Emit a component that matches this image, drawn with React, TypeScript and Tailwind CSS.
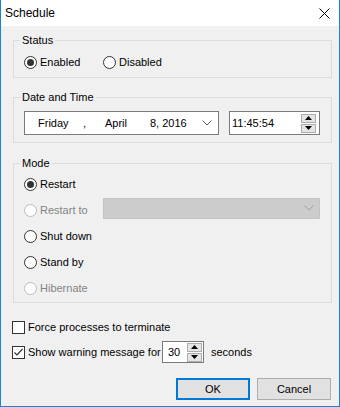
import type { ReactNode } from "react";

const font = "font-['Liberation_Sans',Arial,sans-serif]";

function Radio({ label, checked, disabled }: { label: string; checked?: boolean; disabled?: boolean }) {
  return (
    <div className="flex items-center">
      <span
        className={`flex h-[13px] w-[13px] items-center justify-center rounded-full border ${
          disabled ? "border-[#bcbcbc] bg-white" : "border-[#333333] bg-white"
        }`}
      >
        {checked && <span className="h-[7px] w-[7px] rounded-full bg-[#333333]" />}
      </span>
      <span className={`ml-[3px] ${disabled ? "text-[#838383]" : "text-black"}`}>{label}</span>
    </div>
  );
}

function Checkbox({ checked }: { checked?: boolean }) {
  return (
    <span className="flex h-[13px] w-[13px] items-center justify-center border border-[#333333] bg-white">
      {checked && (
        <svg width="11" height="11" viewBox="0 0 11 11">
          <path d="M1.5 5.5 L4 8 L9.5 2" fill="none" stroke="#333" strokeWidth="1.2" />
        </svg>
      )}
    </span>
  );
}

function Spin() {
  return (
    <div className="flex w-[15px] flex-col gap-[1px]">
      <div className="flex h-[9px] items-center justify-center border border-[#adadad] bg-[#e5e5e5]">
        <svg width="7" height="4" viewBox="0 0 7 4">
          <path d="M3.5 0 L7 4 L0 4 Z" fill="#000" />
        </svg>
      </div>
      <div className="flex h-[9px] items-center justify-center border border-[#adadad] bg-[#e5e5e5]">
        <svg width="7" height="4" viewBox="0 0 7 4">
          <path d="M0 0 L7 0 L3.5 4 Z" fill="#000" />
        </svg>
      </div>
    </div>
  );
}

function Chevron({ color }: { color: string }) {
  return (
    <svg width="10" height="6" viewBox="0 0 10 6">
      <path d="M0.5 0.5 L5 5 L9.5 0.5" fill="none" stroke={color} strokeWidth="1" />
    </svg>
  );
}

function Group({ title, className, children }: { title: string; className: string; children: ReactNode }) {
  return (
    <fieldset className={`border border-[#dcdcdc] ${className}`}>
      <legend className="ml-[6px] px-[2px] leading-[14px] text-black">{title}</legend>
      {children}
    </fieldset>
  );
}

export default function App() {
  return (
    <div
      className={`${font} flex h-[407px] w-[340px] flex-col border border-t-0 border-[#1883d7] bg-[#f0f0f0] text-[11px] text-black`}
    >
      {/* title bar */}
      <div className="flex h-[26px] items-center justify-between bg-white pl-[4px] pr-[9px]">
        <span className="text-[12px]">Schedule</span>
        <svg width="11" height="11" viewBox="0 0 11 11">
          <path d="M0.5 0.5 L10.5 10.5 M10.5 0.5 L0.5 10.5" stroke="#000" strokeWidth="1" />
        </svg>
      </div>

      <div className="flex flex-1 flex-col pl-[12px] pr-[7px] pt-[7px]">
        <Group title="Status" className="h-[45px]">
          <div className="flex h-[16px] items-center pl-[10px] pt-[0px] mt-[7px]">
            <div className="w-[79px]">
              <Radio label="Enabled" checked />
            </div>
            <Radio label="Disabled" />
          </div>
        </Group>

        <Group title="Date and Time" className="mt-[12px] h-[53px]">
          <div className="mt-[7px] flex pl-[10px]">
            <div className="flex h-[24px] w-[195px] items-center border border-[#7a7a7a] bg-white pl-[13px] pr-[6px]">
              <span className="w-[45px]">Friday</span>
              <span className="w-[22px]">,</span>
              <span className="w-[45px]">April</span>
              <span className="flex-1">8, 2016</span>
              <Chevron color="#606060" />
            </div>
            <div className="ml-[10px] flex h-[24px] w-[91px] items-center justify-between border border-[#7a7a7a] bg-white pl-[2px] pr-[3px]">
              <span>11:45:54</span>
              <Spin />
            </div>
          </div>
        </Group>

        <Group title="Mode" className="mt-[13px] h-[147px]">
          <div className="flex flex-col pl-[10px] pt-[1px]">
            <div className="flex h-[26px] items-center">
              <Radio label="Restart" checked />
            </div>
            <div className="flex h-[26px] items-center">
              <div className="w-[79px]">
                <Radio label="Restart to" disabled />
              </div>
              <div className="-mt-[4px] flex h-[21px] flex-1 items-center justify-end border border-[#c4c4c4] bg-[#cccccc] pr-[5px] mr-[11px]">
                <Chevron color="#a0a0a0" />
              </div>
            </div>
            <div className="flex h-[26px] items-center">
              <Radio label="Shut down" />
            </div>
            <div className="flex h-[26px] items-center">
              <Radio label="Stand by" />
            </div>
            <div className="flex h-[26px] items-center">
              <Radio label="Hibernate" disabled />
            </div>
          </div>
        </Group>

        <div className="-ml-[1px] mt-[15px] flex h-[18px] items-center">
          <Checkbox />
          <span className="ml-[3px]">Force processes to terminate</span>
        </div>
        <div className="-ml-[1px] mt-[5px] flex h-[22px] items-center">
          <Checkbox checked />
          <span className="ml-[3px] w-[134px]">Show warning message for</span>
          <div className="flex h-[22px] w-[42px] items-center justify-between border border-[#7a7a7a] bg-white pl-[5px] pr-[1px]">
            <span>30</span>
            <Spin />
          </div>
          <span className="ml-[7px]">seconds</span>
        </div>

        <div className="mr-[1px] mt-[15px] flex justify-end gap-[7px]">
          <button className="flex h-[22px] w-[74px] items-center justify-center border-2 border-[#0078d7] bg-[#e1e1e1]">
            OK
          </button>
          <button className="flex h-[22px] w-[74px] items-center justify-center border border-[#adadad] bg-[#e1e1e1]">
            Cancel
          </button>
        </div>
      </div>
    </div>
  );
}
